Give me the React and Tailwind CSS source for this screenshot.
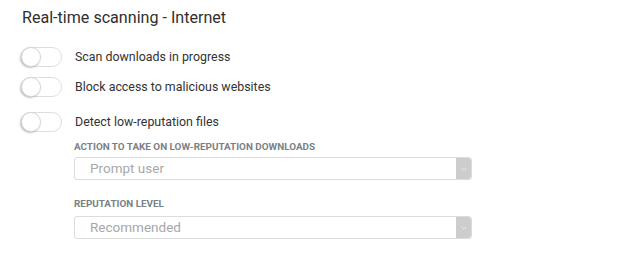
import { useState } from "react";

function Toggle({ on, onClick }) {
  return (
    <button
      type="button"
      onClick={onClick}
      className={`flex h-[20px] w-[41px] shrink-0 items-center rounded-full border border-[#dedede] ${
        on ? "justify-end bg-[#4fa3d8]" : "justify-start bg-white"
      }`}
    >
      <span className="-ml-px h-[20px] w-[20px] rounded-full border border-[#d6d6d6] bg-white shadow-[-1px_1px_2px_rgba(0,0,0,0.25)]"></span>
    </button>
  );
}

function Select({ value }) {
  return (
    <div className="flex h-[23px] w-[398px] items-stretch rounded-[3px] border border-[#dcdcdc] bg-white">
      <div className="flex flex-1 items-center pl-[15px] text-[13.5px] text-[#a8a8a8]">{value}</div>
      <div className="flex w-[15px] items-center justify-center rounded-r-[3px] bg-[#cdcdcd]">
        <svg className="h-[8px] w-[8px] text-[#eaeaea]" fill="none" stroke="currentColor" viewBox="0 0 24 24">
          <path strokeLinecap="round" strokeLinejoin="round" strokeWidth={3} d="M5 9l7 7 7-7" />
        </svg>
      </div>
    </div>
  );
}

export default function App() {
  const [toggles, setToggles] = useState({ scan: false, block: false, detect: false });
  const flip = (k) => setToggles({ ...toggles, [k]: !toggles[k] });

  return (
    <div className="h-[267px] w-[640px] bg-white pl-[21px] pt-[8px] font-['Roboto',sans-serif] text-[#333]">
      <h1 className="pl-px text-[16.1px] leading-[20px] text-[#2f2f2f]">Real-time scanning - Internet</h1>

      <div className="mt-[19px] flex items-center gap-[13px]">
        <Toggle on={toggles.scan} onClick={() => flip("scan")} />
        <span className="text-[12.4px] text-[#333]">Scan downloads in progress</span>
      </div>
      <div className="mt-[10px] flex items-center gap-[13px]">
        <Toggle on={toggles.block} onClick={() => flip("block")} />
        <span className="text-[12.4px] text-[#333]">Block access to malicious websites</span>
      </div>
      <div className="mt-[15px] flex items-center gap-[13px]">
        <Toggle on={toggles.detect} onClick={() => flip("detect")} />
        <span className="text-[12.4px] text-[#333]">Detect low-reputation files</span>
      </div>

      <div className="pl-[53px]">
        <div className="mt-[9px] text-[9.9px] font-bold uppercase leading-[12px] text-[#7b7f86]">
          Action to take on low-reputation downloads
        </div>
        <div className="mt-[4px]">
          <Select value="Prompt user" />
        </div>
        <div className="mt-[18px] text-[9.9px] font-bold uppercase leading-[12px] text-[#7b7f86]">
          Reputation level
        </div>
        <div className="mt-[6px]">
          <Select value="Recommended" />
        </div>
      </div>
    </div>
  );
}
